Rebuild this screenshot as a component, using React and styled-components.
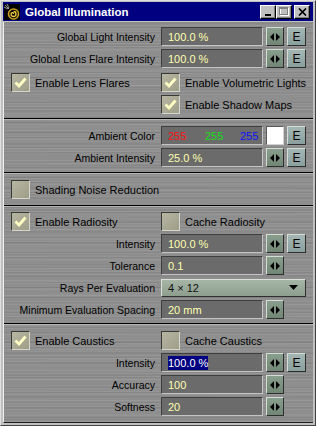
import React from "react";
import styled, { createGlobalStyle } from "styled-components";

const GlobalStyle = createGlobalStyle`
  html, body {
    margin: 0;
    padding: 0;
    background: #c0c0c0;
  }
  body {
    font-family: "Liberation Sans", Arial, sans-serif;
  }
`;

// window chrome //
const Window = styled.div`
  width: 316px;
  height: 426px;
  box-sizing: border-box;
  background: #c0c0c0;
  border-top: 1px solid #dfdfdf;
  border-left: 1px solid #dfdfdf;
  border-right: 1px solid #404040;
  border-bottom: 1px solid #404040;
  padding: 1px 2px 2px 2px;
  display: flex;
  flex-direction: column;
`;

const TitleBar = styled.div`
  height: 19px;
  flex: none;
  background: #000080;
  display: flex;
  align-items: center;
  padding: 0 3px 0 1px;
`;

const Title = styled.div`
  color: #fff;
  font-weight: bold;
  font-size: 11.5px;
  margin-left: 5px;
  flex: 1;
`;

const CaptionButton = styled.div`
  width: 16px;
  height: 14px;
  box-sizing: border-box;
  background: #c0c0c0;
  border-top: 1px solid #fff;
  border-left: 1px solid #fff;
  border-right: 1px solid #000;
  border-bottom: 1px solid #000;
  box-shadow: inset -1px -1px 0 #808080;
  display: flex;
  align-items: center;
  justify-content: center;
  margin-left: ${(p) => (p.$gap ? "2px" : "0")};
`;

const Body = styled.div`
  flex: 1;
  margin-top: 1px;
  display: flex;
  flex-direction: column;
  border-left: 1px solid #eeeeee;
  border-bottom: 1px solid #202020;
  background-color: #8e8e8e;
  background-image:
    repeating-linear-gradient(180deg, rgba(255,255,255,0.06) 0 1px, transparent 1px 3px),
    repeating-linear-gradient(180deg, rgba(0,0,0,0.06) 0 1px, transparent 1px 5px),
    repeating-linear-gradient(180deg, rgba(255,255,255,0.04) 0 1px, transparent 1px 7px),
    repeating-linear-gradient(180deg, rgba(0,0,0,0.04) 0 2px, transparent 2px 11px),
    repeating-linear-gradient(179.3deg, rgba(255,255,255,0.03) 0 1px, transparent 1px 13px);
`;

const Section = styled.div`
  display: flex;
  flex-direction: column;
  gap: 3px;
  padding: ${(p) => p.$pad || "6px 0 5px"};
  flex: ${(p) => (p.$grow ? 1 : "none")};
`;

const Divider = styled.div`
  height: 1px;
  flex: none;
  background: #000;
  box-shadow: 0 1px 0 rgba(255, 255, 255, 0.35);
`;

// rows //
const Row = styled.div`
  display: grid;
  grid-template-columns: 154px 102px 18px 19px;
  column-gap: 3px;
  align-items: center;
  height: 19px;
`;

const Label = styled.div`
  text-align: right;
  padding-right: 3px;
  font-size: 10.5px;
  color: #000;
  white-space: nowrap;
`;

const Field = styled.div`
  height: 19px;
  box-sizing: border-box;
  background: #6b6b6b;
  border-top: 1px solid #3e3e3e;
  border-left: 1px solid #3e3e3e;
  border-right: 1px solid #c4c4c4;
  border-bottom: 1px solid #c4c4c4;
  display: flex;
  align-items: center;
  padding-left: 6px;
  font-size: 11px;
  color: #ffffb0;
  white-space: nowrap;
  overflow: hidden;
`;

const Selected = styled.span`
  background: #000080;
  color: #fff;
  padding: 1px 0;
`;

const Channel = styled.span`
  flex: none;
  color: ${(p) => p.$c};
  width: ${(p) => p.$w}px;
`;

const SmallButton = styled.div`
  height: 19px;
  box-sizing: border-box;
  background: ${(p) => (p.$blue ? "linear-gradient(#a3b6b4, #8aa09e)" : "linear-gradient(#8a9e8d, #728676)")};
  border-top: 1px solid #d4dcd6;
  border-left: 1px solid #d4dcd6;
  border-right: 1px solid #2e2e2e;
  border-bottom: 1px solid #2e2e2e;
  display: flex;
  align-items: center;
  justify-content: center;
  font-size: 12px;
  color: #000;
`;

const Swatch = styled.div`
  height: 19px;
  box-sizing: border-box;
  background: #fff;
  border-top: 1px solid #5a5a5a;
  border-left: 1px solid #5a5a5a;
  border-right: 1px solid #d0d0d0;
  border-bottom: 1px solid #d0d0d0;
`;

const Dropdown = styled.div`
  grid-column: 2 / 5;
  height: 18px;
  box-sizing: border-box;
  background: linear-gradient(#a6b6a6, #8d9d8e);
  border-top: 1px solid #d8e0d8;
  border-left: 1px solid #d8e0d8;
  border-right: 1px solid #303030;
  border-bottom: 1px solid #303030;
  display: flex;
  align-items: center;
  justify-content: space-between;
  padding: 0 7px 0 6px;
  font-size: 11px;
  color: #101010;
`;

const CheckRow = styled.div`
  display: grid;
  grid-template-columns: 157px 1fr;
  height: 19px;
  align-items: center;
  margin-top: ${(p) => p.$mt || "0"};
`;

const CheckItem = styled.div`
  display: flex;
  align-items: center;
  gap: 5px;
  padding-left: ${(p) => (p.$left ? "7px" : "0")};
  font-size: 11px;
  color: #000;
  white-space: nowrap;
`;

const Box = styled.div`
  width: 19px;
  height: 19px;
  box-sizing: border-box;
  background: linear-gradient(135deg, #b7b6a2, #9e9d88);
  border-top: 1px solid #3a3a34;
  border-left: 1px solid #3a3a34;
  border-right: 1px solid #d6d6cc;
  border-bottom: 1px solid #d6d6cc;
  display: flex;
  align-items: center;
  justify-content: center;
`;

// icons //
const Arrows = () => (
  <svg width="10" height="8" viewBox="0 0 10 8">
    <polygon points="0,4 4,0 4,8" fill="#000" />
    <polygon points="6,0 10,4 6,8" fill="#000" />
  </svg>
);

const Tick = () => (
  <svg width="13" height="11" viewBox="0 0 13 11">
    <polyline points="1.5,5.5 5,9 11.5,1.5" fill="none" stroke="#ffffc4" strokeWidth="2.8" />
  </svg>
);

const AppIcon = () => (
  <svg width="16" height="16" viewBox="0 0 16 16">
    <rect width="16" height="16" fill="#000" />
    <path d="M1 1 L5 5 M3 0 L5 4 M0 3 L4 5" stroke="#9a9a9a" strokeWidth="1" />
    <circle cx="9.5" cy="10" r="5" fill="none" stroke="#c8a020" strokeWidth="1.6" />
    <path d="M9.5 7.5 a2.5 2.5 0 1 1 -2.5 2.5 a1.3 1.3 0 0 1 2.6 0" fill="none" stroke="#f0d040" strokeWidth="1.3" />
  </svg>
);

const Minimize = () => (
  <svg width="8" height="8" viewBox="0 0 8 8">
    <rect x="1" y="6" width="6" height="2" fill="#000" />
  </svg>
);

const Maximize = () => (
  <svg width="10" height="9" viewBox="0 0 10 9">
    <rect x="1.5" y="1.5" width="8" height="7" fill="none" stroke="#fff" />
    <rect x="0.5" y="0.5" width="8" height="7" fill="none" stroke="#808080" />
    <rect x="0" y="0" width="9" height="2" fill="#808080" />
  </svg>
);

const Close = () => (
  <svg width="9" height="8" viewBox="0 0 9 8">
    <path d="M1 0.5 L8 7.5 M8 0.5 L1 7.5" stroke="#000" strokeWidth="1.7" />
  </svg>
);

const Caret = () => (
  <svg width="9" height="5" viewBox="0 0 9 5">
    <polygon points="0,0 9,0 4.5,5" fill="#000" />
  </svg>
);

const ValueRow = ({ label, children, edit = true }) => (
  <Row>
    <Label>{label}</Label>
    <Field>{children}</Field>
    <SmallButton>
      <Arrows />
    </SmallButton>
    {edit ? <SmallButton $blue>E</SmallButton> : <span />}
  </Row>
);

const Check = ({ label, checked, left }) => (
  <CheckItem $left={left}>
    <Box>{checked ? <Tick /> : null}</Box>
    {label}
  </CheckItem>
);

const App = () => {
  return (
    <>
      <GlobalStyle />
      <Window>
        <TitleBar>
          <AppIcon />
          <Title>Global Illumination</Title>
          <CaptionButton>
            <Minimize />
          </CaptionButton>
          <CaptionButton>
            <Maximize />
          </CaptionButton>
          <CaptionButton $gap>
            <Close />
          </CaptionButton>
        </TitleBar>

        <Body>
          <Section $pad="5px 0 4px">
            <ValueRow label="Global Light Intensity">100.0 %</ValueRow>
            <ValueRow label="Global Lens Flare Intensity">100.0 %</ValueRow>
            <CheckRow $mt="2px">
              <Check left checked label="Enable Lens Flares" />
              <Check checked label="Enable Volumetric Lights" />
            </CheckRow>
            <CheckRow>
              <span />
              <Check checked label="Enable Shadow Maps" />
            </CheckRow>
          </Section>
          <Divider />

          <Section $pad="7px 0 5px">
            <Row>
              <Label>Ambient Color</Label>
              <Field>
                <Channel $c="#ff1010" $w={37}>255</Channel>
                <Channel $c="#10e010" $w={35}>255</Channel>
                <Channel $c="#1010ff" $w={20}>255</Channel>
              </Field>
              <Swatch />
              <SmallButton $blue>E</SmallButton>
            </Row>
            <ValueRow label="Ambient Intensity">25.0 %</ValueRow>
          </Section>
          <Divider />

          <Section $pad="7px 0 6px">
            <CheckRow>
              <Check left label="Shading Noise Reduction" />
            </CheckRow>
          </Section>
          <Divider />

          <Section $pad="6px 0 4px">
            <CheckRow>
              <Check left checked label="Enable Radiosity" />
              <Check label="Cache Radiosity" />
            </CheckRow>
            <ValueRow label="Intensity">100.0 %</ValueRow>
            <ValueRow label="Tolerance" edit={false}>0.1</ValueRow>
            <Row>
              <Label>Rays Per Evaluation</Label>
              <Dropdown>
                <span>4 × 12</span>
                <Caret />
              </Dropdown>
            </Row>
            <ValueRow label="Minimum Evaluation Spacing" edit={false}>20 mm</ValueRow>
          </Section>
          <Divider />

          <Section $pad="7px 0 4px" $grow>
            <CheckRow>
              <Check left checked label="Enable Caustics" />
              <Check label="Cache Caustics" />
            </CheckRow>
            <ValueRow label="Intensity">
              <Selected>100.0 %</Selected>
            </ValueRow>
            <ValueRow label="Accuracy" edit={false}>100</ValueRow>
            <ValueRow label="Softness" edit={false}>20</ValueRow>
          </Section>
        </Body>
      </Window>
    </>
  );
};

export default App;
